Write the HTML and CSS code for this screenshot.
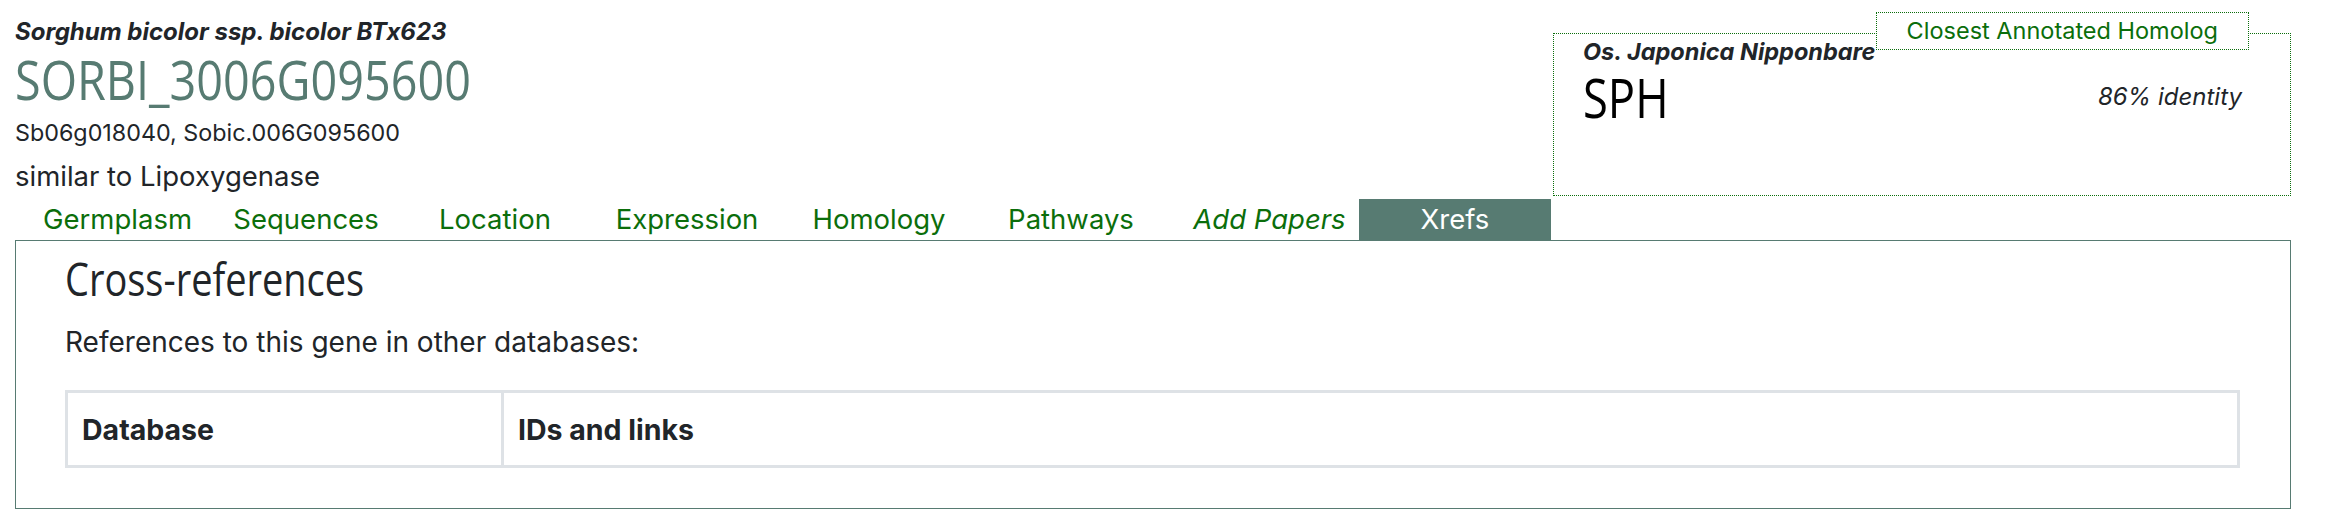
FILE: index.html
```html
<!DOCTYPE html>
<html lang="en">
<head>
<meta charset="utf-8">
<title>SORBI_3006G095600</title>
<link rel="stylesheet" href="styles.css">
</head>
<body>
<div class="page">
  <div class="top">
    <div class="gene-head">
      <div class="species">Sorghum bicolor ssp. bicolor BTx623</div>
      <div class="gene-id">SORBI_3006G095600</div>
      <div class="synonyms">Sb06g018040, Sobic.006G095600</div>
      <div class="desc">similar to Lipoxygenase</div>
      <nav class="tabs">
        <a class="tab tab-first">Germplasm</a>
        <a class="tab tab-second">Sequences</a>
        <a class="tab">Location</a>
        <a class="tab">Expression</a>
        <a class="tab">Homology</a>
        <a class="tab">Pathways</a>
        <a class="tab tab-italic">Add Papers</a>
        <a class="tab tab-active">Xrefs</a>
      </nav>
    </div>
    <div class="homolog">
      <div class="homolog-label">Closest Annotated Homolog</div>
      <div class="homolog-species">Os. Japonica Nipponbare</div>
      <div class="homolog-row">
        <span class="homolog-name">SPH</span>
        <span class="identity">86% identity</span>
      </div>
    </div>
  </div>
  <div class="panel">
    <h2 class="panel-title">Cross-references</h2>
    <p class="panel-text">References to this gene in other databases:</p>
    <table class="xref-table">
      <thead>
        <tr><th class="col-db">Database</th><th>IDs and links</th></tr>
      </thead>
    </table>
  </div>
</div>
</body>
</html>
```
FILE: styles.css
```css
html, body {
  margin: 0;
  padding: 0;
  background: #fff;
}
body {
  font-family: Inter, "Noto Sans", sans-serif;
  color: #212529;
}
.page {
  width: 2276px;
  margin-left: 15px;
}
.top {
  display: flex;
  align-items: flex-start;
}
.gene-head {
  width: 1536px;
  padding-top: 17px;
}
.species {
  font-size: 24px;
  line-height: 30px;
  font-weight: 700;
  font-style: italic;
}
.gene-id {
  margin-top: 3px;
  font-family: "Open Sans", sans-serif;
  font-size: 55px;
  line-height: 58px;
  color: #577b72;
  transform: scaleX(0.85);
  transform-origin: left center;
}
.synonyms {
  margin-top: 12px;
  font-size: 23.3px;
  line-height: 26px;
}
.desc {
  margin-top: 15px;
  font-size: 27.5px;
  line-height: 30px;
}
.tabs {
  display: flex;
  margin-top: 8px;
  height: 41px;
}
.tab {
  box-sizing: border-box;
  width: 192px;
  text-align: center;
  font-size: 27.5px;
  line-height: 41px;
  color: #0b6e0b;
}
.tab-first {
  padding-left: 13px;
}
.tab-second {
  padding-left: 6px;
}
.tab-italic {
  font-style: italic;
  padding-left: 13px;
}
.tab-active {
  background: #577b72;
  color: #fff;
}
.homolog {
  position: relative;
  box-sizing: border-box;
  width: 738px;
  height: 163px;
  margin-left: 2px;
  margin-top: 33px;
  border: 1px dotted #0b6e0b;
  padding: 4px 48px 0 29px;
}
.homolog-label {
  position: absolute;
  top: -22px;
  right: 41px;
  background: #fff;
  border: 1px dotted #0b6e0b;
  padding: 0 30px;
  font-size: 23.5px;
  line-height: 36px;
  color: #0b6e0b;
}
.homolog-species {
  font-size: 23.5px;
  line-height: 28px;
  font-weight: 700;
  font-style: italic;
}
.homolog-row {
  display: flex;
  justify-content: space-between;
  align-items: flex-start;
  margin-top: 2px;
}
.homolog-name {
  font-family: "Open Sans", sans-serif;
  font-size: 54px;
  line-height: 58px;
  color: #000;
  transform: scaleX(0.84);
  transform-origin: left center;
}
.identity {
  font-size: 24px;
  line-height: 58px;
  font-style: italic;
}
.panel {
  box-sizing: border-box;
  width: 2276px;
  border: 1px solid #577b72;
  padding: 12px 50px 40px 49px;
}
.panel-title {
  margin: 0;
  font-family: "Open Sans", sans-serif;
  font-weight: 400;
  font-size: 46px;
  line-height: 50px;
  transform: scaleX(0.825);
  transform-origin: left center;
}
.panel-text {
  margin: 23px 0 0;
  font-size: 28px;
  line-height: 32px;
}
.xref-table {
  margin-top: 32px;
  width: 100%;
  border-collapse: collapse;
  border: 3px solid #dee2e6;
}
.xref-table th {
  border: 3px solid #dee2e6;
  text-align: left;
  height: 72px;
  padding: 0 14px;
  font-size: 28.5px;
  font-weight: 700;
}
.xref-table .col-db {
  width: 405px;
}
```
